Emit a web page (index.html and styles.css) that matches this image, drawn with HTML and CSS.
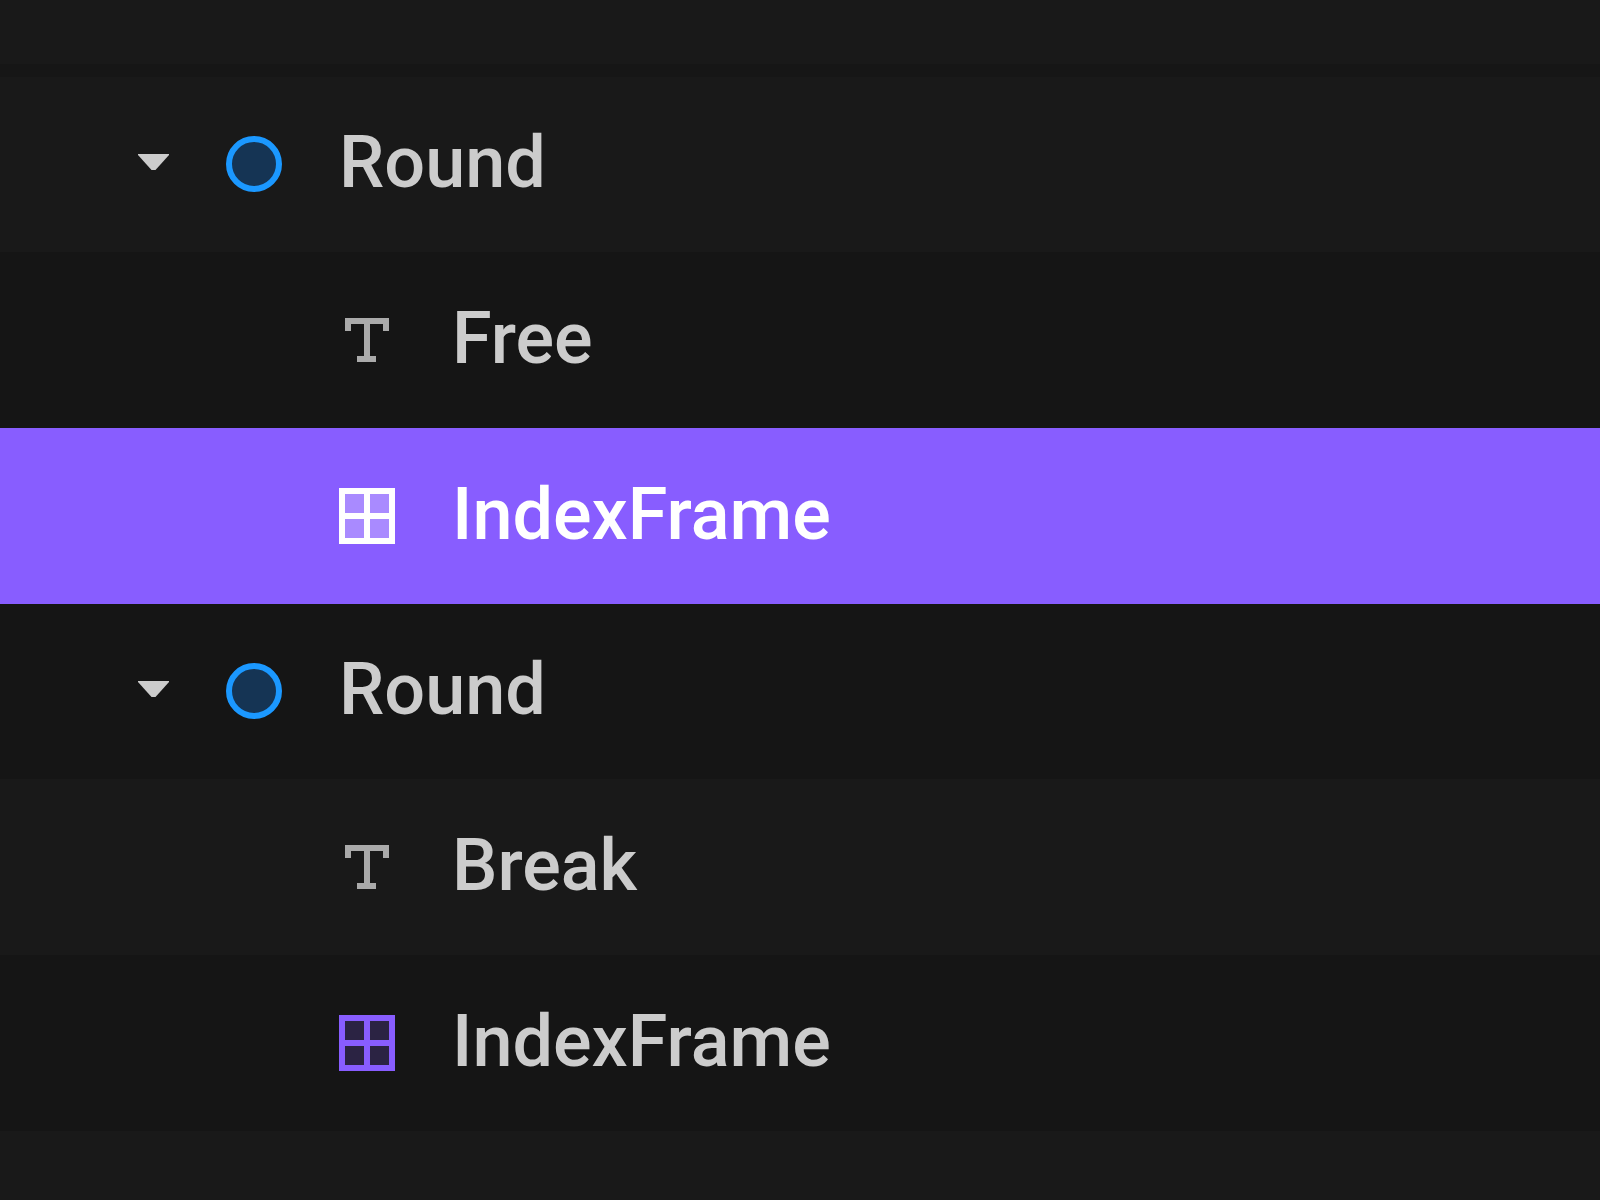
FILE: index.html
```html
<!DOCTYPE html>
<html lang="en">
<head>
<meta charset="utf-8">
<meta name="viewport" content="width=device-width, initial-scale=1">
<title>Layers</title>
<link rel="stylesheet" href="styles.css">
</head>
<body>
<svg class="sprite" aria-hidden="true">
  <symbol id="caret" viewBox="0 0 32 18"><path d="M0 0H31V1L17.500 16H13.500L0 1Z" fill="currentColor"/></symbol>
  <symbol id="oval" viewBox="0 0 56 56"><circle cx="28" cy="28" r="25" fill="#153454" stroke="#1b98ff" stroke-width="6"/></symbol>
  <symbol id="type" viewBox="0 0 56 56"><path d="M6 6H50V19H44V12H31V44H37V50H18V44H25V12H12V19H6Z" fill="#aaa"/></symbol>
  <symbol id="frame" viewBox="0 0 56 56"><path class="frame-fill" d="M3 3H53V53H3Z" fill="currentColor"/><path d="M3 3H53V53H3ZM28 3V53M3 28H53" fill="none" stroke="currentColor" stroke-width="6"/></symbol>
</svg>
<main class="panel">
  <header class="panel-top"></header>
  <ul class="layers">
    <li>
      <div class="row parent">
        <button class="toggle" type="button" aria-label="Collapse Round" aria-expanded="true"><svg class="caret"><use href="#caret"/></svg></button>
        <svg class="icon"><use href="#oval"/></svg>
        <span class="label">Round</span>
      </div>
      <ul>
        <li class="row child alt"><svg class="icon"><use href="#type"/></svg><span class="label">Free</span></li>
        <li class="row child selected"><svg class="icon"><use href="#frame"/></svg><span class="label">IndexFrame</span></li>
      </ul>
    </li>
    <li>
      <div class="row parent alt">
        <button class="toggle" type="button" aria-label="Collapse Round" aria-expanded="true"><svg class="caret"><use href="#caret"/></svg></button>
        <svg class="icon"><use href="#oval"/></svg>
        <span class="label">Round</span>
      </div>
      <ul>
        <li class="row child"><svg class="icon"><use href="#type"/></svg><span class="label">Break</span></li>
        <li class="row child alt"><svg class="icon"><use href="#frame"/></svg><span class="label">IndexFrame</span></li>
      </ul>
    </li>
  </ul>
</main>
</body>
</html>
```
FILE: styles.css
```css
* {
  box-sizing: border-box;
}

body {
  margin: 0;
  background: #191919;
  color: #ccc;
  font: 500 72px/84px Roboto, "Liberation Sans", sans-serif;
}

ul {
  margin: 0;
  padding: 0;
  list-style: none;
}

.sprite {
  display: none;
}

.panel-top {
  height: 77px;
  border-bottom: 13px solid #161616;
}

.row {
  display: flex;
  align-items: center;
  gap: 56px;
}

.parent {
  height: 175px;
  padding: 0 0 1px 138px;
}

.child {
  height: 176px;
  padding-left: 339px;
}

.alt {
  background: #151515;
}

.selected {
  background: #885dff;
  color: #fff;
}

.toggle {
  display: flex;
  width: 32px;
  padding: 0 0 2px;
  border: 0;
  background: none;
  color: inherit;
}

.caret {
  width: 32px;
  height: 18px;
}

.icon {
  --fill: 0.2;
  flex: none;
  width: 56px;
  height: 56px;
  color: #885dff;
}

.selected .icon {
  --fill: 0.28;
  color: #fff;
}

.frame-fill {
  fill-opacity: var(--fill);
}

.label {
  padding: 0 0 2px 1px;
}
```
